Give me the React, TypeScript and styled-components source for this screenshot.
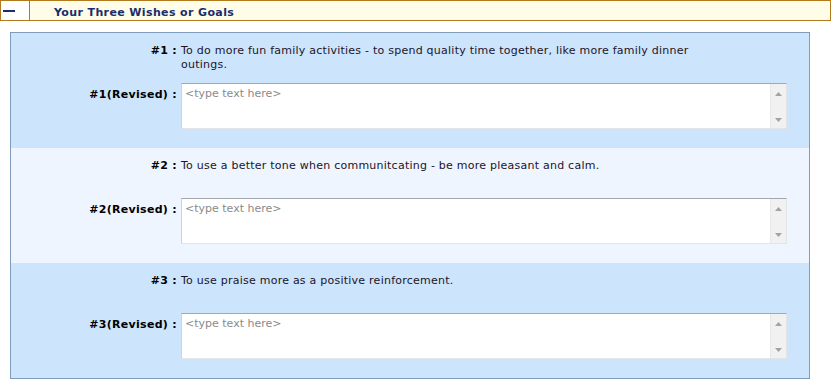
import React from "react";
import styled, { createGlobalStyle } from "styled-components";

const GlobalStyle = createGlobalStyle`
  html, body { margin: 0; padding: 0; background: #ffffff; }
  body {
    font-family: "DejaVu Sans", Verdana, sans-serif;
    font-size: 11px;
    color: #1c1428;
  }
`;

const Page = styled.div`
  width: 832px;
`;

const Header = styled.div`
  box-sizing: border-box;
  width: 831px;
  height: 21px;
  display: flex;
  align-items: stretch;
  border: 1px solid #b27a1c;
  background: #fffde8;
`;

const Toggle = styled.button`
  box-sizing: border-box;
  width: 29px;
  padding: 0 0 0 2px;
  margin: 0;
  border: none;
  border-right: 1px solid #b27a1c;
  background: #ffffff;
  display: flex;
  align-items: center;
  cursor: pointer;
`;

const Minus = styled.span`
  display: block;
  width: 12px;
  height: 2px;
  background: #1b2d6b;
`;

const Title = styled.div`
  padding: 3px 0 0 24px;
  display: flex;
  align-items: center;
  font-weight: bold;
  font-size: 11px;
  letter-spacing: 0.38px;
  color: #1b2d6b;
`;

const Panel = styled.div`
  box-sizing: border-box;
  width: 800px;
  margin: 11px 0 0 10px;
  border: 1px solid #7f9cba;
`;

const Row = styled.div<{ $alt?: boolean }>`
  box-sizing: border-box;
  height: 115px;
  padding: 9px 22px 19px 0;
  display: grid;
  grid-template-columns: 166px 1fr;
  grid-template-rows: 41px 46px;
  column-gap: 4px;
  background: ${(p) => (p.$alt ? "#eef5fe" : "#cce5fc")};
`;

const Label = styled.div<{ $revised?: boolean }>`
  text-align: right;
  font-weight: bold;
  line-height: 14px;
  letter-spacing: 0.3px;
  color: #000000;
  padding-top: ${(p) => (p.$revised ? "5px" : "2px")};
  white-space: nowrap;
`;

const Question = styled.div`
  max-width: 530px;
  padding-top: 2px;
  line-height: 14px;
  letter-spacing: 0.24px;
`;

const Field = styled.div`
  box-sizing: border-box;
  height: 46px;
  display: flex;
  background: #ffffff;
  border-top: 1px solid #a4a8ae;
  border-left: 1px solid #cfd3d8;
  border-bottom: 1px solid #e2e4e6;
  border-right: 1px solid #e2e4e6;
`;

const Input = styled.textarea`
  flex: 1;
  margin: 0;
  padding: 3px 3px;
  border: none;
  outline: none;
  resize: none;
  overflow: hidden;
  font-family: "DejaVu Sans", Verdana, sans-serif;
  font-size: 11px;
  line-height: 13px;
  color: #333;
  background: transparent;
  &::placeholder { color: #8a8a8a; opacity: 1; }
`;

const Scrollbar = styled.div`
  width: 16px;
  background: #f1f1f1;
  border-left: 1px solid #e8e8e8;
  display: flex;
  flex-direction: column;
  justify-content: space-between;
  align-items: center;
  padding: 8px 0 6px;
  box-sizing: border-box;
`;

const Arrow = ({ up }: { up?: boolean }) => (
  <svg width="7" height="4" viewBox="0 0 7 4">
    {up ? (
      <polygon points="3.5,0 7,4 0,4" fill="#a3a3a3" />
    ) : (
      <polygon points="0,0 7,0 3.5,4" fill="#a3a3a3" />
    )}
  </svg>
);

const wishes = [
  "To do more fun family activities - to spend quality time together, like more family dinner outings.",
  "To use a better tone when communitcating - be more pleasant and calm.",
  "To use praise more as a positive reinforcement.",
];

export default function App() {
  return (
    <Page>
      <GlobalStyle />
      <Header>
        <Toggle aria-label="Collapse">
          <Minus />
        </Toggle>
        <Title>Your Three Wishes or Goals</Title>
      </Header>
      <Panel>
        {wishes.map((w, i) => (
          <Row key={i} $alt={i === 1}>
            <Label>#{i + 1} :</Label>
            <Question>{w}</Question>
            <Label $revised>#{i + 1}(Revised) :</Label>
            <Field>
              <Input placeholder="<type text here>" />
              <Scrollbar>
                <Arrow up />
                <Arrow />
              </Scrollbar>
            </Field>
          </Row>
        ))}
      </Panel>
    </Page>
  );
}
